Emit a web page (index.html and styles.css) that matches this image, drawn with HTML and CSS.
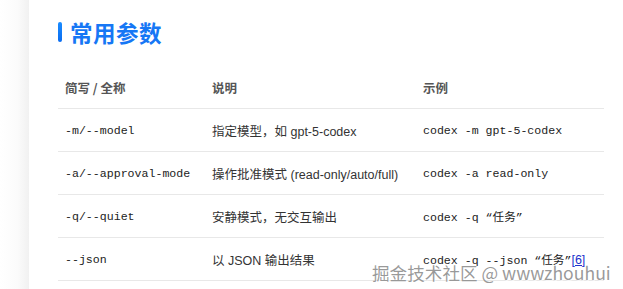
FILE: index.html
```html
<!DOCTYPE html>
<html lang="zh">
<head>
<meta charset="utf-8">
<link rel="stylesheet" href="styles.css">
</head>
<body>
<div class="page">
  <div class="side"></div>
  <main class="content">
    <h2 class="title"><span class="bar"></span><span>常用参数</span></h2>
    <table class="params">
      <colgroup>
        <col class="c1"><col class="c2"><col class="c3">
      </colgroup>
      <thead>
        <tr><th>简写 / 全称</th><th>说明</th><th>示例</th></tr>
      </thead>
      <tbody>
        <tr><td class="mono">-m/--model</td><td>指定模型，如 gpt-5-codex</td><td class="mono">codex -m gpt-5-codex</td></tr>
        <tr><td class="mono">-a/--approval-mode</td><td>操作批准模式 (read-only/auto/full)</td><td class="mono">codex -a read-only</td></tr>
        <tr><td class="mono">-q/--quiet</td><td>安静模式，无交互输出</td><td class="mono">codex -q “任务”</td></tr>
        <tr><td class="mono">--json</td><td>以 JSON 输出结果</td><td class="mono">codex -q --json “任务”<a class="ref" href="#">[6]</a></td></tr>
      </tbody>
    </table>
  </main>
  <div class="watermark">掘金技术社区 @ wwwzhouhui</div>
</div>
</body>
</html>
```
FILE: styles.css
```css
html, body {
  margin: 0;
  padding: 0;
  background: #fff;
}
.page {
  position: relative;
  display: flex;
  width: 623px;
  height: 289px;
  overflow: hidden;
  font-family: "Liberation Sans", "Noto Sans CJK SC", sans-serif;
}
.side {
  width: 29px;
  flex: none;
  background: linear-gradient(to right, #ffffff 0%, #fbfbfb 60%, #f1f1f1 100%);
}
.content {
  flex: 1;
  padding: 0 0 0 29px;
}
.title {
  display: flex;
  align-items: center;
  gap: 8px;
  margin: 18px 0 0 0;
  height: 28px;
  font-family: "Noto Sans CJK SC", sans-serif;
  font-size: 22.5px;
  font-weight: 700;
  color: #1677f5;
  letter-spacing: 0.5px;
}
.bar {
  width: 4px;
  height: 20px;
  border-radius: 2px;
  background: linear-gradient(to bottom, #1a8cff, #0a6cf0);
}
.params {
  margin-top: 20px;
  width: 546px;
  border-collapse: collapse;
  table-layout: fixed;
}
.c1 { width: 147px; }
.c2 { width: 211px; }
.c3 { width: 188px; }
th, td {
  text-align: left;
  padding: 0 7px;
  border-bottom: 1px solid #e8e8e8;
  white-space: nowrap;
}
th {
  height: 42px;
  font-family: "Noto Sans CJK SC", sans-serif;
  font-size: 12.5px;
  font-weight: 700;
  color: #555;
}
td {
  height: 42px;
  font-size: 12.5px;
  color: #333;
}
.mono {
  font-family: "Liberation Mono", "Noto Sans CJK SC", monospace;
  font-size: 11.6px;
  color: #222;
}
.ref {
  font-family: "Liberation Sans", sans-serif;
  font-size: 12.5px;
  color: #2233cc;
  text-decoration: underline;
}
.watermark {
  position: absolute;
  left: 372px;
  top: 260px;
  font-family: "Noto Sans CJK SC", sans-serif;
  font-size: 17.6px;
  color: rgba(120, 120, 120, 0.75);
  text-shadow: 0 0 1px #fff, 1px 1px 0 rgba(255,255,255,0.6);
  white-space: nowrap;
}
```
